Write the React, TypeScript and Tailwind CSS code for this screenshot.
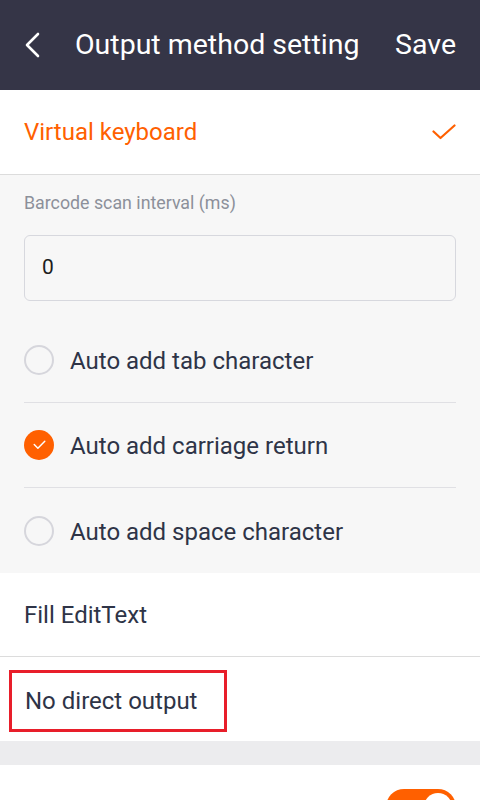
import { useState } from 'react'

type Option = { key: string; label: string }

const options: Option[] = [
  { key: 'tab', label: 'Auto add tab character' },
  { key: 'cr', label: 'Auto add carriage return' },
  { key: 'space', label: 'Auto add space character' },
]

function CheckMark({ className }: { className?: string }) {
  return (
    <svg viewBox="0 0 24 16" className={className} fill="none">
      <path d="M1.5 7.5 L8.5 14 L22.5 1.5" stroke="currentColor" strokeWidth="2.2" strokeLinecap="round" strokeLinejoin="round" />
    </svg>
  )
}

function RoundCheck({ checked }: { checked: boolean }) {
  if (checked) {
    return (
      <div className="flex h-[30px] w-[30px] shrink-0 items-center justify-center rounded-full bg-[#ff6000]">
        <svg viewBox="0 0 16 12" className="h-[10px] w-[13px]" fill="none">
          <path d="M1.5 5.5 L6 10 L14.5 1.5" stroke="white" strokeWidth="1.8" strokeLinecap="round" strokeLinejoin="round" />
        </svg>
      </div>
    )
  }
  return <div className="h-[30px] w-[30px] shrink-0 rounded-full border-2 border-[#d6d6dc]" />
}

export default function App() {
  const [checked, setChecked] = useState<Record<string, boolean>>({ tab: false, cr: true, space: false })
  const [soundOn, setSoundOn] = useState(true)

  return (
    <div className="h-[800px] w-[480px] overflow-hidden bg-white font-['Roboto',sans-serif]">
      <header className="flex h-[90px] items-center bg-[#353547] pl-[24px] pr-[24px] text-white">
        <svg viewBox="0 0 16 26" className="h-[26px] w-[16px]" fill="none">
          <path d="M14 2 L3 13 L14 24" stroke="white" strokeWidth="2.6" strokeLinecap="round" strokeLinejoin="round" />
        </svg>
        <h1 className="ml-[35px] flex-1 text-[28.5px] leading-none">Output method setting</h1>
        <button className="text-[28.5px] leading-none">Save</button>
      </header>

      <div className="flex h-[85px] items-center justify-between border-b border-[#dcdcdc] px-[24px]">
        <span className="text-[24px] text-[#ff6000]">Virtual keyboard</span>
        <CheckMark className="h-[16px] w-[24px] text-[#ff6000]" />
      </div>

      <section className="bg-[#f7f7f7] px-[24px] pt-[18px]">
        <div className="text-[17.8px] leading-[20px] text-[#8c909a]">Barcode scan interval (ms)</div>
        <div className="mt-[22px] flex h-[66px] items-center rounded-[6px] border border-[#d7d8de] px-[17px] text-[21px] text-[#1d1d1d]">
          0
        </div>
        <div className="mt-[17px]">
          {options.map((o, i) => (
            <div
              key={o.key}
              onClick={() => setChecked({ ...checked, [o.key]: !checked[o.key] })}
              className={`flex h-[85px] cursor-pointer items-center gap-[16px] ${i < options.length - 1 ? 'border-b border-[#e0e0e4]' : ''}`}
            >
              <RoundCheck checked={checked[o.key]} />
              <span className="pt-[2px] text-[24px] text-[#2e3447]">{o.label}</span>
            </div>
          ))}
        </div>
      </section>

      <div className="flex h-[84px] items-center border-b border-[#dcdcdc] px-[24px] text-[24px] text-[#2e3447]">Fill EditText</div>
      <div className="flex h-[84px] items-center px-[9px] pt-[4px]">
        <div className="flex h-[62px] w-[218px] items-center border-[3px] border-[#e81e2a] pl-[13px] text-[24px] text-[#2e3447]">
          No direct output
        </div>
      </div>

      <div className="h-[24px] bg-[#ececee]" />

      <div className="flex h-[84px] items-center justify-between px-[24px]">
        <span className="mt-[6px] text-[24px] text-[#2e3447]">Sound</span>
        <button
          onClick={() => setSoundOn(!soundOn)}
          className={`flex h-[36px] w-[70px] items-center rounded-full px-[4px] ${soundOn ? 'justify-end bg-[#ff6000]' : 'justify-start bg-[#d6d6dc]'}`}
        >
          <span className="h-[28px] w-[28px] rounded-full bg-white" />
        </button>
      </div>
    </div>
  )
}
